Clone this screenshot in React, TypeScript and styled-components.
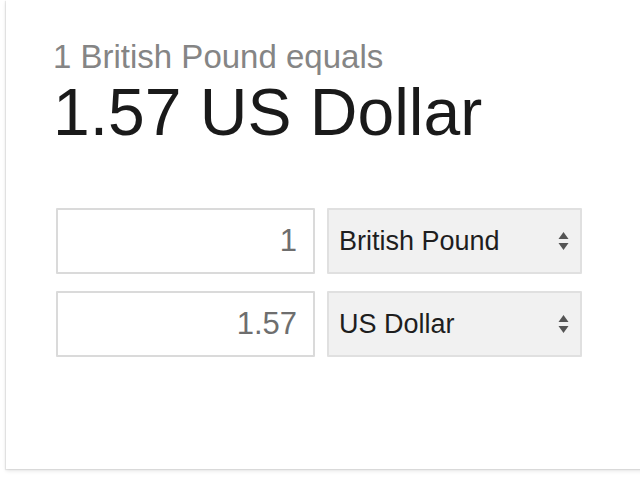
import styled, { createGlobalStyle } from "styled-components";

const GlobalStyle = createGlobalStyle`
  html, body {
    margin: 0;
    padding: 0;
    background: #ffffff;
    overflow: hidden;
  }
  body {
    font-family: "Liberation Sans", Arial, Helvetica, sans-serif;
  }
`;

const Page = styled.div`
  width: 640px;
  height: 477px;
  padding-left: 6px;
  box-sizing: border-box;
  overflow: hidden;
`;

const Card = styled.div`
  width: 660px;
  height: 469px;
  box-sizing: border-box;
  padding: 40px 0 0 47px;
  background: #ffffff;
  box-shadow: -1px 1px 1px rgba(0, 0, 0, 0.08), 0 2px 4px rgba(0, 0, 0, 0.1);
`;

const Subtitle = styled.div`
  font-size: 33px;
  line-height: 33px;
  color: #858585;
`;

const Result = styled.div`
  margin-top: 6px;
  font-size: 66px;
  line-height: 66px;
  color: #1a1a1a;
`;

const Form = styled.div`
  margin-top: 63px;
  margin-left: 3px;
  display: flex;
  flex-direction: column;
  gap: 17px;
`;

const Row = styled.div`
  display: flex;
  gap: 12px;
`;

const AmountInput = styled.input`
  width: 259px;
  height: 66px;
  box-sizing: border-box;
  border: 2px solid #dadada;
  border-radius: 1px;
  padding: 0 16px 0 12px;
  text-align: right;
  font-family: "Liberation Sans", Arial, sans-serif;
  font-size: 31px;
  color: #6e6e6e;
  background: #ffffff;
  outline: none;
`;

const CurrencySelect = styled.div`
  width: 255px;
  height: 66px;
  box-sizing: border-box;
  border: 2px solid #e0e0e0;
  border-radius: 1px;
  background: #f1f1f1;
  padding: 0 11px 0 10px;
  display: flex;
  align-items: center;
  justify-content: space-between;
  font-size: 27px;
  color: #1e1e1e;
`;

const Arrows = styled.svg`
  width: 11px;
  height: 20px;
  flex-shrink: 0;
`;

function SelectArrows() {
  return (
    <Arrows viewBox="0 0 11 20">
      <path d="M5.5 1 L10.5 8 H0.5 Z" fill="#555555" />
      <path d="M5.5 19 L10.5 12 H0.5 Z" fill="#555555" />
    </Arrows>
  );
}

const rows = [
  { amount: "1", currency: "British Pound" },
  { amount: "1.57", currency: "US Dollar" },
];

export default function App() {
  return (
    <>
      <GlobalStyle />
      <Page>
        <Card>
          <Subtitle>1 British Pound equals</Subtitle>
          <Result>1.57 US Dollar</Result>
          <Form>
            {rows.map((r) => (
              <Row key={r.currency}>
                <AmountInput type="text" value={r.amount} readOnly />
                <CurrencySelect>
                  <span>{r.currency}</span>
                  <SelectArrows />
                </CurrencySelect>
              </Row>
            ))}
          </Form>
        </Card>
      </Page>
    </>
  );
}
